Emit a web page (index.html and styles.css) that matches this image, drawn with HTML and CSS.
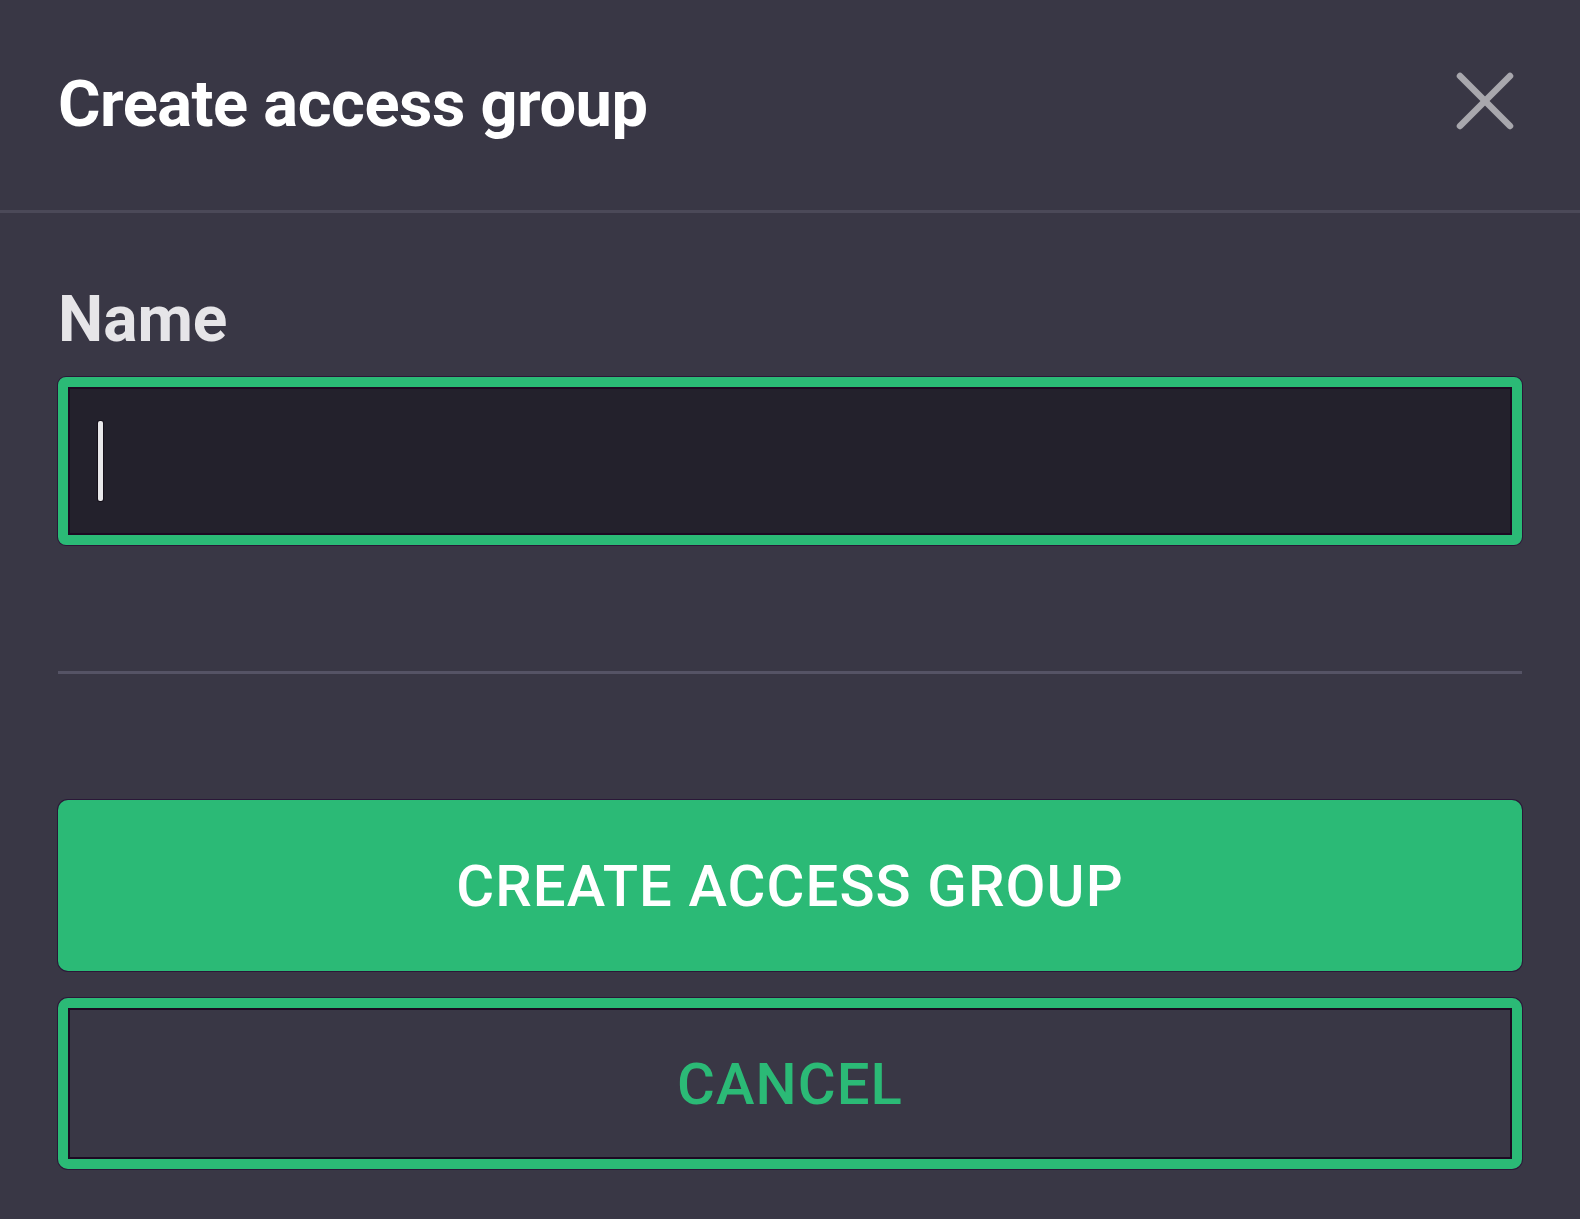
FILE: index.html
```html
<!DOCTYPE html>
<html lang="en">
<head>
<meta charset="utf-8">
<title>Create access group</title>
<link rel="stylesheet" href="styles.css">
</head>
<body>
<div class="dialog">
  <header class="dialog-header">
    <h1 class="dialog-title">Create access group</h1>
    <button class="close-btn" type="button" aria-label="Close">
      <svg width="58" height="58" viewBox="0 0 58 58" aria-hidden="true">
        <line x1="4" y1="4" x2="54" y2="54" />
        <line x1="54" y1="4" x2="4" y2="54" />
      </svg>
    </button>
  </header>
  <div class="dialog-body">
    <label class="field-label" for="name">Name</label>
    <div class="field-input">
      <span class="caret"></span>
    </div>
    <hr class="divider">
    <div class="actions">
      <button class="btn btn-primary" type="button">CREATE ACCESS GROUP</button>
      <button class="btn btn-outline" type="button">CANCEL</button>
    </div>
  </div>
</div>
</body>
</html>
```
FILE: styles.css
```css
html, body {
  margin: 0;
  padding: 0;
  background: #393745;
}

body {
  font-family: Roboto, "Liberation Sans", sans-serif;
  width: 1580px;
  height: 1219px;
  overflow: hidden;
}

.dialog {
  display: flex;
  flex-direction: column;
  height: 100%;
}

.dialog-header {
  display: flex;
  align-items: center;
  justify-content: space-between;
  padding: 71px 66px 73px 58px;
  border-bottom: 3px solid #4b4958;
}

.dialog-title {
  margin: 0;
  font-size: 65px;
  line-height: 66px;
  font-weight: 700;
  letter-spacing: -0.5px;
  color: #ffffff;
}

.close-btn {
  background: none;
  border: 0;
  padding: 0;
  margin-bottom: 7px;
  display: flex;
}

.close-btn svg line {
  stroke: #a8a7ad;
  stroke-width: 6.5;
  stroke-linecap: round;
}

.dialog-body {
  display: flex;
  flex-direction: column;
  padding: 75px 58px 0 58px;
}

.field-label {
  font-size: 64px;
  line-height: 64px;
  font-weight: 700;
  color: #e6e5e8;
}

.field-input {
  margin-top: 25px;
  height: 168px;
  box-sizing: border-box;
  border: 10px solid #2bba76;
  border-radius: 8px;
  background: #23212c;
  box-shadow: 0 0 0 1px #2b1738, inset 0 0 0 2px #1c0b22;
  display: flex;
  align-items: center;
  padding-left: 30px;
}

.caret {
  width: 5px;
  height: 80px;
  background: #e8e8ea;
  border-radius: 2px;
  box-shadow: 0 0 0 1px #15101a;
}

.divider {
  margin: 126px 0 0 0;
  border: 0;
  height: 3px;
  background: #555365;
}

.actions {
  margin-top: 126px;
  display: flex;
  flex-direction: column;
  gap: 27px;
}

.btn {
  height: 171px;
  box-sizing: border-box;
  border-radius: 10px;
  font-family: Roboto, "Liberation Sans", sans-serif;
  font-size: 58px;
  font-weight: 500;
  letter-spacing: 1.1px;
  display: flex;
  align-items: center;
  justify-content: center;
  padding: 0;
  box-shadow: 0 0 0 1px #2b1738;
}

.btn-primary {
  background: #2bba76;
  border: 0;
  color: #ffffff;
}

.btn-outline {
  background: transparent;
  border: 10px solid #2bba76;
  color: #2bba76;
  box-shadow: 0 0 0 1px #2b1738, inset 0 0 0 2px #1c0b22;
}
```
